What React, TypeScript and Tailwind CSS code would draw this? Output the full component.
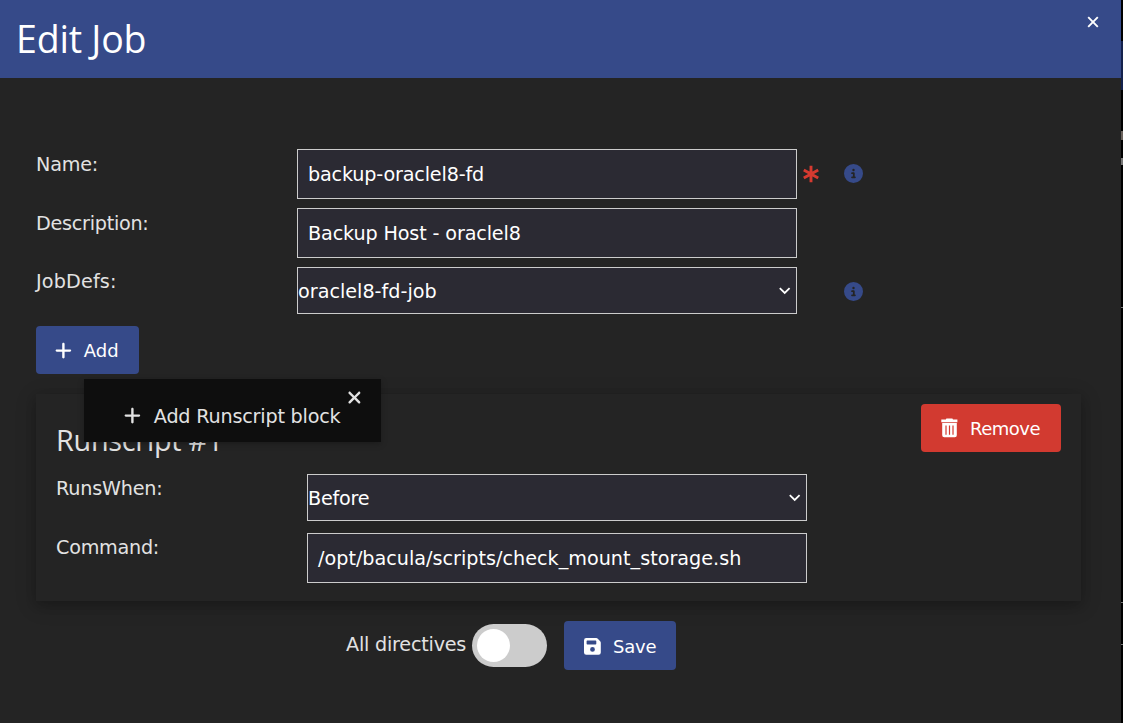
import type { ReactNode } from 'react';
import { FaCircleInfo, FaPlus, FaXmark } from 'react-icons/fa6';

function Chevron() {
  return (
    <svg width="12" height="8" viewBox="0 0 12 8" className="mr-[5px] shrink-0" fill="none" stroke="#fff" strokeWidth="1.8">
      <path d="M.8 1.2l4.9 4.8 4.9-4.8" />
    </svg>
  );
}

function Required() {
  return (
    <svg width="16" height="18" viewBox="0 0 16 18" stroke="#d63a30" strokeWidth="2.9">
      <path d="M8 .8v16.4M.8 4.9l14.4 8.2M15.2 4.9.8 13.1" />
    </svg>
  );
}

function TrashIcon() {
  return (
    <svg width="17" height="20" viewBox="0 0 17 20" className="mr-[12px] shrink-0">
      <path
        fill="#fff"
        d="M5.4.6h6l.6 1h4.4v2.7H.3V1.6h4.5zM1.2 5h14.6v12.3a2 2 0 0 1-2 2H3.2a2 2 0 0 1-2-2z"
      />
      <path stroke="#d23a30" strokeWidth="1.2" d="M5 7.6v9.2M8.5 7.6v9.2M12 7.6v9.2" />
    </svg>
  );
}

function SaveIcon() {
  return (
    <svg width="17" height="17" viewBox="0 0 17 17" className="mr-[12px] shrink-0" fill="#fff" fillRule="evenodd">
      <path d="M2.3.1h9.9c.6 0 1.2.2 1.6.7l2.4 2.4c.4.4.6 1 .6 1.6v9.7a2.3 2.3 0 0 1-2.3 2.3H2.3A2.3 2.3 0 0 1 0 14.500V2.400A2.300 2.300 0 0 1 2.300.1zM3.300 2.500a.7.7 0 0 0-.7.7v2.500c0 .4.3.7.7.7h8.300c.4 0 .7-.3.7-.7V3.200a.7.7 0 0 0-.7-.7zM8.500 9a2.400 2.400 0 1 0 0 4.800 2.400 2.400 0 0 0 0-4.800z" />
    </svg>
  );
}

function TextBox({ children }: { children: ReactNode }) {
  return (
    <div className="flex h-[50px] w-[500px] shrink-0 items-center border border-[#ccc] bg-[#2b2a33] pt-[3px] pl-[10px] text-white">
      {children}
    </div>
  );
}

function SelectBox({ children }: { children: ReactNode }) {
  return (
    <div className="flex h-[47px] w-[500px] shrink-0 items-center justify-between border border-[#ccc] bg-[#2b2a33] pt-px text-white">
      {children}
      <Chevron />
    </div>
  );
}

function Label({ children, className }: { children: ReactNode; className: string }) {
  return <div className={`shrink-0 leading-[29px] ${className}`}>{children}</div>;
}

function Info() {
  return <FaCircleInfo className="mb-px ml-auto size-[19px] text-[#364a89]" />;
}

export default function App() {
  return (
    <div className="flex h-[723px] w-[1123px] overflow-hidden bg-black font-['DejaVu_Sans',Verdana,sans-serif] text-[19.2px] whitespace-nowrap text-[#e2e2e2]">
      <div className="flex w-[1121px] flex-col bg-[#242424]">
        <header className="flex h-[78px] shrink-0 items-start justify-between bg-[#364a89] text-white">
          <h1 className="mt-[12px] ml-4 font-['Open_Sans','Noto_Sans',sans-serif] text-[37.5px] leading-[54px]">
            <span className="tracking-[-0.2px]">Edit Job</span>
          </h1>
          <svg width="12" height="12" viewBox="0 0 12 12" className="mt-4 mr-[22px]" stroke="#fff" strokeWidth="1.9">
            <path d="M1.2 1.2l9.6 9.6M10.8 1.2 1.2 10.8" />
          </svg>
        </header>

        <main className="flex flex-col pt-[71px] pl-9">
          <div className="flex h-[59px] items-start">
            <Label className="w-[261px] pt-px tracking-[-0.2px]"><span>Name:</span></Label>
            <TextBox><span className="tracking-[-0.17px]">backup-oraclel8-fd</span></TextBox>
            <div className="flex h-[50px] w-[66px] items-center pl-[6px]">
              <Required />
              <Info />
            </div>
          </div>
          <div className="flex h-[59px] items-start">
            <Label className="w-[261px] pt-px tracking-[-0.27px]"><span>Description:</span></Label>
            <TextBox><span className="tracking-[-0.14px]">Backup Host - oraclel8</span></TextBox>
          </div>
          <div className="flex h-[59px] items-start">
            <Label className="w-[261px] tracking-[0.15px]"><span>JobDefs:</span></Label>
            <SelectBox><span className="pt-[2px]">oraclel8-fd-job</span></SelectBox>
            <div className="flex h-[50px] w-[66px] items-center">
              <Info />
            </div>
          </div>

          <div className="relative h-[48px] w-[103px]">
            <button className="flex h-full w-full items-center rounded bg-[#364a89] pl-[19px] text-[18px] text-white">
              <FaPlus className="mt-px mr-[12px] h-[19.2px] w-[16.8px]" />
              <span>Add</span>
            </button>
            <div className="absolute top-[53px] left-12 z-10 flex h-[63px] w-[297px] items-start bg-[#0e0e0e] pt-[23px] pl-[40px] shadow-[0_2px_6px_rgba(0,0,0,0.25)]">
              <FaPlus className="mt-[4px] mr-[13px] h-[19.2px] w-[16.8px]" />
              <span className="leading-[29px] tracking-[-0.2px]">Add Runscript block</span>
              <FaXmark className="absolute top-[9px] right-[18px] h-[19.2px] w-[16.8px]" />
            </div>
          </div>

          <section className="mt-5 flex h-[207px] w-[1045px] flex-col pl-5 shadow-[0_4px_10px_0_rgba(0,0,0,0.16),0_4px_20px_0_rgba(0,0,0,0.19)]">
            <div className="flex h-[80px] items-start justify-between pr-5">
              <h2 className="mt-[25px] font-['Open_Sans','Noto_Sans',sans-serif] text-[28.8px] leading-[42px] tracking-[-0.25px]"><span>Runscript #1</span></h2>
              <button className="mt-[10px] flex h-[48px] w-[140px] items-center rounded bg-[#d23a30] pl-5 text-[18px] text-white">
                <TrashIcon />
                <span className="tracking-[-0.5px]">Remove</span>
              </button>
            </div>
            <div className="flex h-[59px] items-start">
              <Label className="w-[251px] tracking-[-0.2px]"><span>RunsWhen:</span></Label>
              <SelectBox><span className="pt-[2px] tracking-[-0.25px]">Before</span></SelectBox>
            </div>
            <div className="flex h-[50px] items-start">
              <Label className="w-[251px] tracking-[-0.25px]"><span>Command:</span></Label>
              <TextBox><span>/opt/bacula/scripts/check_mount_storage.sh</span></TextBox>
            </div>
          </section>

          <div className="mt-5 flex h-[49px] pl-[310px]">
            <span className="mt-[9px] w-[126px] leading-[29px] tracking-[-0.22px]">All directives</span>
            <div className="mt-[3px] flex h-[43px] w-[75px] items-center rounded-full bg-[#ccc] pl-[5px]">
              <div className="size-[33px] rounded-full bg-white" />
            </div>
            <button className="ml-[17px] flex w-[112px] items-center rounded bg-[#364a89] pt-px pl-5 text-[18px] text-white">
              <SaveIcon />
              <span className="tracking-[-0.2px]">Save</span>
            </button>
          </div>
        </main>
      </div>

      <div className="flex w-[2px] flex-col">
        <div className="mt-[41px] h-[49px] bg-[#14224d]" />
        <div className="mt-[41px] h-[9px] bg-[#6a625c]" />
        <div className="mt-[18px] h-[7px] bg-[#777]" />
        <div className="mt-[142px] h-px bg-[#777]" />
        <div className="mt-[294px] h-px bg-[#777]" />
        <div className="mt-[41px] h-px bg-[#777]" />
      </div>
    </div>
  );
}
